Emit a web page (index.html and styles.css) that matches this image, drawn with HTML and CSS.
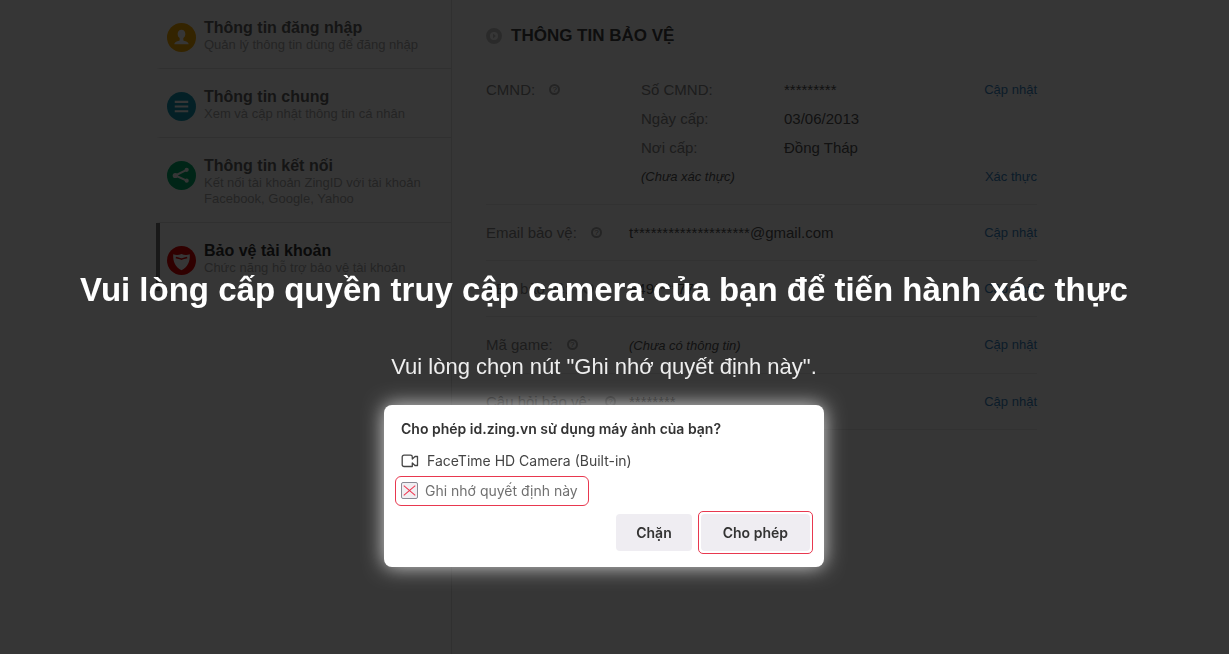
FILE: index.html
```html
<!DOCTYPE html>
<html lang="vi">
<head>
    <meta charset="UTF-8">
    <meta name="viewport" content="width=device-width, initial-scale=1.0">
    <title>Bảo vệ tài khoản</title>
    <link rel="stylesheet" href="styles.css">
</head>
<body>

    <div class="page">
        <nav class="sidebar">
            <a class="menu-item" href="#">
                <svg class="menu-icon" viewBox="0 0 28 28">
                    <circle cx="14" cy="14" r="14" fill="#f5a800"/>
                    <path d="M14 6.500c-2.400 0-3.700 1.700-3.700 4.100 0 1.700.7 3.100 1.900 4v2.200c-1.400.6-4.600.8-5.200 3.700h14c-.6-2.900-3.800-3.100-5.200-3.700v-2.200c1.200-.9 1.900-2.300 1.900-4 0-2.400-1.300-4.100-3.700-4.100z" fill="#fff"/>
                </svg>
                <span class="menu-text">
                    <b class="menu-title">Thông tin đăng nhập</b>
                    <span class="menu-desc">Quản lý thông tin dùng để đăng nhập</span>
                </span>
            </a>
            <a class="menu-item" href="#">
                <svg class="menu-icon" viewBox="0 0 28 28">
                    <circle cx="14" cy="14" r="14" fill="#1799b5"/>
                    <path d="M7.500 9.500h13M7.500 14h13M7.500 18.500h13" stroke="#fff" stroke-width="2"/>
                </svg>
                <span class="menu-text">
                    <b class="menu-title">Thông tin chung</b>
                    <span class="menu-desc">Xem và cập nhật thông tin cá nhân</span>
                </span>
            </a>
            <a class="menu-item" href="#">
                <svg class="menu-icon" viewBox="0 0 28 28">
                    <circle cx="14" cy="14" r="14" fill="#00b06c"/>
                    <path d="M19 8.500L8 14l11 5" fill="none" stroke="#fff" stroke-width="2"/>
                    <circle cx="19" cy="8.500" r="2" fill="#fff"/>
                    <circle cx="8" cy="14" r="2.500" fill="#fff"/>
                    <circle cx="19" cy="19" r="2" fill="#fff"/>
                </svg>
                <span class="menu-text">
                    <b class="menu-title">Thông tin kết nối</b>
                    <span class="menu-desc">Kết nối tài khoản ZingID với tài khoản Facebook, Google, Yahoo</span>
                </span>
            </a>
            <a class="menu-item active" href="#">
                <svg class="menu-icon" viewBox="0 0 28 28">
                    <circle cx="14" cy="14" r="14" fill="#e00000"/>
                    <path d="M6 8c3 1.300 5.500.8 8-.2 2.500 1 5 1.500 8 .2.400 7-2 12.500-8 15.500C8 20.500 5.600 15 6 8z" fill="#fff"/>
                    <path d="M8.500 11c2 .6 3.800.7 5.500 1.700 1.700-1 3.500-1.100 5.500-1.700" fill="none" stroke="#e00000" stroke-width="1.500"/>
                </svg>
                <span class="menu-text">
                    <b class="menu-title">Bảo vệ tài khoản</b>
                    <span class="menu-desc">Chức năng hỗ trợ bảo vệ tài khoản</span>
                </span>
            </a>
        </nav>

        <main class="content">
            <h2 class="content-title">
                <svg class="title-icon" viewBox="0 0 16 16">
                    <circle cx="8" cy="8" r="6" fill="none" stroke="#c8c8c8" stroke-width="4"/>
                    <path d="M7 5.500L10 8l-3 2.500z" fill="#c8c8c8"/>
                </svg>
                THÔNG TIN BẢO VỆ
            </h2>

            <div class="row">
                <div class="label">CMND: <span class="help">?</span></div>
                <div class="value details">
                    <span class="name">Số CMND:</span><span>*********</span>
                    <span class="name">Ngày cấp:</span><span>03/06/2013</span>
                    <span class="name">Nơi cấp:</span><span>Đồng Tháp</span>
                    <i class="note">(Chưa xác thực)</i>
                </div>
                <div class="actions">
                    <a href="#">Cập nhật</a>
                    <a href="#">Xác thực</a>
                </div>
            </div>
            <div class="row">
                <div class="label">Email bảo vệ: <span class="help">?</span></div>
                <div class="value">t********************@gmail.com</div>
                <div class="actions"><a href="#">Cập nhật</a></div>
            </div>
            <div class="row">
                <div class="label">SĐT bảo vệ: <span class="help">?</span></div>
                <div class="value">849****77</div>
                <div class="actions"><a href="#">Cập nhật</a></div>
            </div>
            <div class="row">
                <div class="label">Mã game: <span class="help">?</span></div>
                <div class="value"><i class="note">(Chưa có thông tin)</i></div>
                <div class="actions"><a href="#">Cập nhật</a></div>
            </div>
            <div class="row">
                <div class="label">Câu hỏi bảo vệ: <span class="help">?</span></div>
                <div class="value">********</div>
                <div class="actions"><a href="#">Cập nhật</a></div>
            </div>
        </main>
    </div>

    <div class="overlay">
        <h1 class="overlay-title">Vui lòng cấp quyền truy cập camera của bạn để tiến hành xác thực</h1>
        <p class="overlay-text">Vui lòng chọn nút "Ghi nhớ quyết định này".</p>

        <div class="dialog" role="dialog">
            <p class="dialog-title">Cho phép id.zing.vn sử dụng máy ảnh của bạn?</p>
            <div class="device">
                <svg class="camera-icon" viewBox="0 0 18 14">
                    <path d="M9 12.500H3A1.800 1.800 0 0 1 1.200 10.700V3A1.800 1.800 0 0 1 3 1.200h6.500A1.800 1.800 0 0 1 11.300 3v2L14 2.500h2.500v9H14L11.300 9v3.500H9" fill="none" stroke="#444" stroke-width="1.300" stroke-linejoin="round"/>
                </svg>
                FaceTime HD Camera (Built-in)
            </div>
            <label class="remember" for="remember">
                <input type="checkbox" id="remember" checked>
                Ghi nhớ quyết định này
            </label>
            <div class="buttons">
                <button type="button">Chặn</button>
                <div class="highlight"><button type="button" class="allow">Cho phép</button></div>
            </div>
        </div>
    </div>

</body>
</html>
```
FILE: styles.css
```css
* {
    box-sizing: border-box;
}

body {
    margin: 0;
    padding-right: 36px;
    background: #fff;
    font-family: "Liberation Sans", Arial, sans-serif;
    font-size: 15px;
    color: #555;
    overflow: hidden;
}

a {
    color: #3a85c0;
    text-decoration: none;
}

/* account page */
.page {
    display: flex;
    max-width: 881px;
    min-height: 100vh;
    margin: 0 auto;
}

.sidebar {
    flex: 0 0 296px;
    border-right: 1px solid #e4e4e4;
}

.menu-item {
    display: flex;
    gap: 8px;
    padding: 18px 16px 15px 7px;
    border-left: 4px solid transparent;
    border-bottom: 1px solid #e4e4e4;
    color: #666;
}

.menu-item.active {
    border-left-color: #777;
    border-bottom: 0;
    color: #333;
}

.menu-icon {
    flex: none;
    width: 29px;
    height: 29px;
    margin-top: 5px;
}

.menu-text {
    display: flex;
    flex-direction: column;
}

.menu-title {
    font-size: 16px;
    line-height: 19px;
}

.menu-desc {
    font-size: 13px;
    line-height: 16px;
    color: #aaa;
}

.content {
    flex: 1;
    padding-left: 34px;
}

.content-title {
    display: flex;
    align-items: center;
    gap: 9px;
    height: 62px;
    margin: 0;
    padding-top: 10px;
    font-size: 17px;
    color: #444;
}

.title-icon {
    width: 16px;
    height: 16px;
}

.row {
    display: flex;
    padding: 13px 0;
    border-bottom: 1px solid #eaeaea;
    line-height: 29px;
}

.label {
    flex: 0 0 143px;
    display: flex;
    align-items: center;
    align-self: flex-start;
    gap: 14px;
    white-space: nowrap;
    color: #888;
}

.help {
    width: 11px;
    height: 11px;
    border: 2px solid #aaa;
    border-radius: 50%;
    font-size: 8px;
    line-height: 7px;
    text-align: center;
}

.value {
    flex: 1;
}

.details {
    display: grid;
    grid-template-columns: 143px 1fr;
    padding-left: 12px;
}

.name {
    color: #888;
}

.note {
    font-size: 13px;
}

.actions {
    display: flex;
    flex-direction: column;
    justify-content: space-between;
    font-size: 13px;
    text-align: right;
}

/* camera permission overlay */
.overlay {
    position: fixed;
    inset: 0;
    display: flex;
    flex-direction: column;
    align-items: center;
    padding: 270px 21px 0 0;
    background: rgba(0, 0, 0, 0.79);
    color: #fff;
}

.overlay-title {
    margin: 0;
    font-size: 33px;
    line-height: 40px;
    white-space: nowrap;
}

.overlay-text {
    margin: 44px 0 25px;
    font-size: 22px;
    line-height: 26px;
    color: #eee;
}

.dialog {
    width: 440px;
    padding: 14px 11px 13px;
    border-radius: 8px;
    background: #fff;
    box-shadow: 0 0 20px rgba(255, 255, 255, 0.8);
    color: #444;
    font-family: Inter, sans-serif;
    font-size: 14px;
}

.dialog-title {
    margin: 0 6px;
    font-weight: 600;
    line-height: 20px;
    color: #333;
}

.device {
    display: flex;
    align-items: center;
    gap: 8px;
    margin: 12px 6px 5px;
    line-height: 20px;
}

.camera-icon {
    width: 18px;
    height: 14px;
}

.remember {
    display: inline-flex;
    align-items: center;
    gap: 7px;
    height: 30px;
    padding: 0 10px 2px 5px;
    border: 1px solid #e8384f;
    border-radius: 6px;
    color: #707070;
}

.remember input {
    appearance: none;
    position: relative;
    width: 17px;
    height: 17px;
    margin: 0;
    border: 1px solid #8a8a95;
    border-radius: 2px;
    background: #f0eef2;
}

/* the red cross inside the tick box */
.remember input:checked::before,
.remember input:checked::after {
    content: "";
    position: absolute;
    top: 7px;
    left: 0;
    width: 15px;
    height: 1px;
    background: #f0304c;
    transform: rotate(40deg);
}

.remember input:checked::after {
    transform: rotate(-40deg);
}

.buttons {
    display: flex;
    justify-content: flex-end;
    align-items: center;
    gap: 6px;
    margin-top: 5px;
}

.buttons button {
    height: 37px;
    padding: 0 20px;
    border: 0;
    border-radius: 4px;
    background: #efedf2;
    color: #333;
    font-family: inherit;
    font-size: 14px;
    font-weight: 600;
}

.buttons .allow {
    padding: 0 22px;
}

.highlight {
    display: flex;
    padding: 2px;
    border: 1px solid #e8384f;
    border-radius: 5px;
}
```
